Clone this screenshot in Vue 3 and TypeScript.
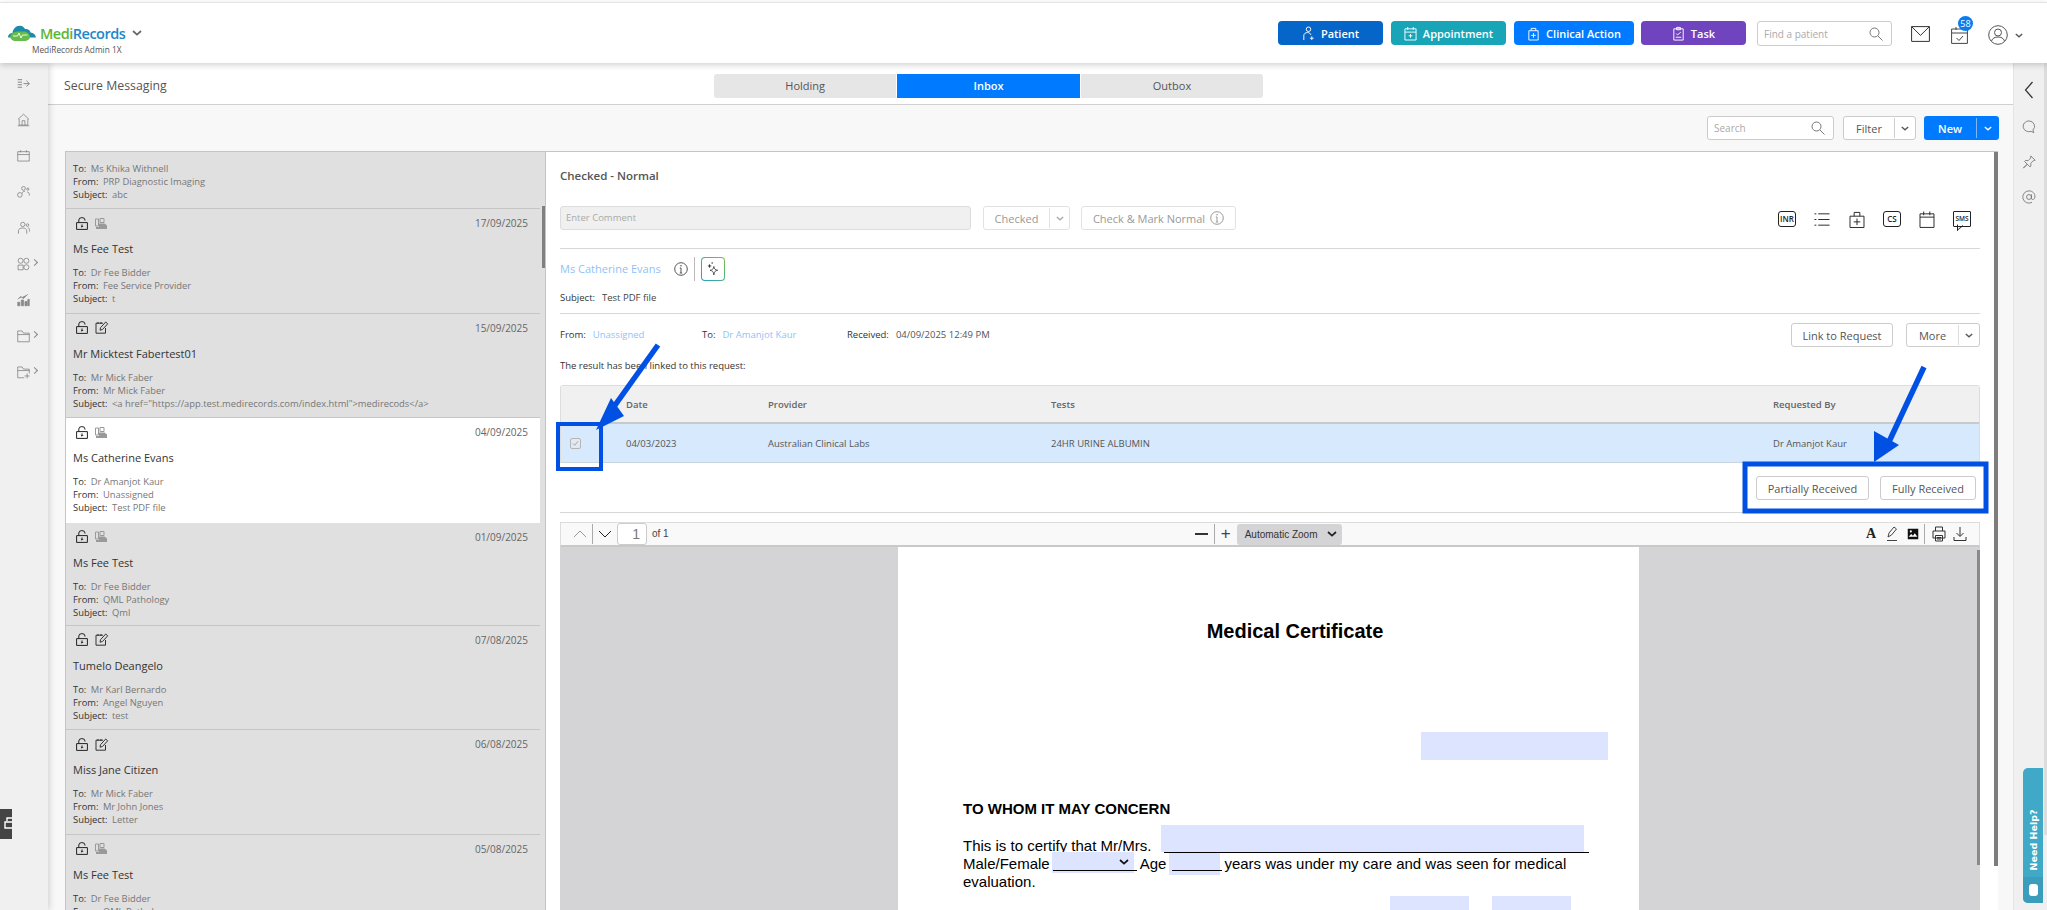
<template>
  <div class="app">
    <svg class="defs" width="0" height="0">
      <defs>
        <symbol id="lock" viewBox="0 0 12 13">
          <path d="M.6 5.6h10.8v6.8H.6zM2.800 5.400V3a3.100 2.400 0 0 1 6.200 0v.6M6 7.400v2.600M4.900 9.100 6 10.200l1.100-1.100" fill="none" stroke="#222" stroke-width="1" />
        </symbol>
        <symbol id="fax" viewBox="0 0 12 11">
          <path d="M.5 1h3v7h-3zM5 .5h4v4H5z" fill="none" stroke="#999" />
          <path d="M4 5.500h5.500l2.500 2V11H1V9h3z" fill="#999" />
        </symbol>
        <symbol id="note" viewBox="0 0 14 13">
          <path d="M1 2.200h7M1 2.200v10h9.500V7M3 1v2M6 1v2M5 9.200l.5-2.500L10.700 1l2 1.800L7.500 8.500z" fill="none" stroke="#333" stroke-width="1" />
        </symbol>
        <symbol id="chev" viewBox="0 0 10 6">
          <path d="M1 1l4 3.600L9 1" fill="none" stroke="currentColor" stroke-width="1.700" />
        </symbol>
        <symbol id="search" viewBox="0 0 14 14">
          <circle cx="5.500" cy="5.500" r="4.500" fill="none" stroke="#777" />
          <path d="M9 9l4.500 4.500" stroke="#777" />
        </symbol>
        <symbol id="info" viewBox="0 0 14 14">
          <circle cx="7" cy="7" r="6.300" fill="none" stroke="currentColor" />
          <path d="M7 6v5M5.800 6H7M5.800 11h2.400" stroke="currentColor" fill="none" />
          <circle cx="7" cy="3.800" r=".8" fill="currentColor" />
        </symbol>
      </defs>
    </svg>

    <header class="topbar">
      <div class="brand">
        <div class="brand-row">
          <svg class="logo" viewBox="0 0 28 16">
            <path d="M0 12.500C0 9.500 2 8 4.500 8 5 4 8 .5 12 .8c2.500.2 4 1.500 5 3.200 3-.3 5 1 5.500 3.500 3 .3 5 2.300 5.500 5z" fill="#1b8ba8" />
            <path d="M2.500 10.500C3.500 7.500 7 6.500 11 6.500h4c4 0 6.500 2 7 5 .3 2.500-2.500 4.500-6 4.500H8c-3.500 0-6.500-2-5.500-5.500z" fill="#66bb4a" />
            <path d="M5 11h4.500l1.500-3 2 5 1.500-3h5" fill="none" stroke="#fff" stroke-width=".9" />
          </svg>
          <span class="brand-name"><span class="medi">Medi</span><span class="records">Records</span></span>
          <svg class="brand-chev"><use href="#chev" /></svg>
        </div>
        <div class="brand-sub">MediRecords Admin 1X</div>
      </div>
      <div class="actions">
        <button class="act patient">
          <svg viewBox="0 0 12 16"><circle cx="6" cy="3.500" r="2.400" fill="none" stroke="#fff" /><path d="M1 15V10c0-2 2-3 4-3 2 0 3 1 3.500 2.500M7.500 13h4M9.500 11v4" fill="none" stroke="#fff" /></svg>
          Patient
        </button>
        <button class="act appt">
          <svg viewBox="0 0 14 16"><path d="M1 3h12v12H1zM1 6.500h12M4 1v3M10 1v3M7 8.500v4M5 10.500h4" fill="none" stroke="#fff" /></svg>
          Appointment
        </button>
        <button class="act clinical">
          <svg viewBox="0 0 14 16"><path d="M2 5h10v10H2zM4.500 5V2.500h5V5M7 7.500v5M4.500 10h5" fill="none" stroke="#fff" /></svg>
          Clinical Action
        </button>
        <button class="act task">
          <svg viewBox="0 0 12 16"><path d="M1 3h10v12H1zM4 1.500h4V4H4zM3.500 8l1.500 1.500L8.500 6.500M3 12h6" fill="none" stroke="#fff" /></svg>
          Task
        </button>
        <div class="find"><span>Find a patient</span><svg><use href="#search" /></svg></div>
        <svg class="mail" viewBox="0 0 19 16"><path d="M.6.600h17.800v14.800H.6zM.6.600l8.900 8.800L18.400.6" fill="none" stroke="#333" /></svg>
        <div class="cal">
          <svg viewBox="0 0 17 18"><path d="M.6 3h15.800v14.400H.6zM.6 7h15.800M5 1v3M12 1v3M5.500 12l2.500 2.500 4-4.500" fill="none" stroke="#444" /></svg>
          <span class="badge">58</span>
        </div>
        <svg class="user" viewBox="0 0 20 20"><circle cx="10" cy="10" r="9.300" fill="none" stroke="#555" /><circle cx="10" cy="7.500" r="3.500" fill="none" stroke="#555" /><path d="M3.500 16c1-3 3.500-4 6.500-4s5.500 1 6.500 4" fill="none" stroke="#555" /></svg>
        <svg class="user-chev"><use href="#chev" /></svg>
      </div>
    </header>

    <div class="body">
      <aside class="rail">
        <svg class="rail-icon" viewBox="0 0 18 16"><path d="M1 2h6M1 5.500h6M1 9h6M1 12.500h6M9 7.500h8M13 3.500l4 4-4 4" fill="none" stroke="#777" stroke-width="1.200" /></svg>
        <svg class="rail-icon" viewBox="0 0 18 18"><path d="M1.500 8 9 1l7.500 7M3 7.500V16h12V7.500M7 16v-6h4v6M1 17h16" fill="none" stroke="#777" /></svg>
        <svg class="rail-icon" viewBox="0 0 18 18"><path d="M1 3h16v13H1zM1 7h16M5 1v3M13 1v3" fill="none" stroke="#777" /></svg>
        <svg class="rail-icon" viewBox="0 0 18 18"><circle cx="9" cy="4" r="2.600" fill="none" stroke="#777" /><circle cx="15" cy="5" r="1.500" fill="none" stroke="#777" /><circle cx="4" cy="13" r="3.200" fill="none" stroke="#777" /><path d="M7 11c.5-2 2-3 4-3M14 9c1.500 0 3 1 3 3v2" fill="none" stroke="#777" /></svg>
        <svg class="rail-icon" viewBox="0 0 18 18"><circle cx="8" cy="4" r="3" fill="none" stroke="#777" /><circle cx="14.500" cy="5" r="1.800" fill="none" stroke="#777" /><path d="M2 17v-4c0-3 3-4 6-4s5 1 5.500 4v4M15 9c1.500 0 2.500 1 2.500 3v2" fill="none" stroke="#777" /></svg>
        <div class="rail-more">
          <svg class="rail-icon" viewBox="0 0 18 18"><circle cx="5" cy="4.500" r="3.500" fill="none" stroke="#777" /><circle cx="13" cy="4.500" r="3.500" fill="none" stroke="#777" /><path d="M1.500 10.500h7v6.500h-7z" fill="none" stroke="#777" /><circle cx="13" cy="13.500" r="3.500" fill="none" stroke="#777" /></svg>
          <i class="rail-chev"></i>
        </div>
        <svg class="rail-icon" viewBox="0 0 18 18"><path d="M1 17V12h3v5zM6 17V9h3v8zM11 17v-6h3v6zM15 17V8h2v9zM1 8l4-4 4 3 6-6" fill="#888" stroke="#888" /></svg>
        <div class="rail-more">
          <svg class="rail-icon" viewBox="0 0 18 18"><path d="M1 2h6l2 3h8v12H1zM1 7h16" fill="none" stroke="#777" /></svg>
          <i class="rail-chev"></i>
        </div>
        <div class="rail-more">
          <svg class="rail-icon" viewBox="0 0 18 18"><path d="M17 11V5H9L7 2H1v15h9M1 7h16M14 11v7M10.500 14.500h7" fill="none" stroke="#777" /></svg>
          <i class="rail-chev"></i>
        </div>
      </aside>

      <main class="main">
        <div class="titlebar">
          <div class="page-title">Secure Messaging</div>
          <div class="tabs">
            <div class="tab">Holding</div>
            <div class="tab on">Inbox</div>
            <div class="tab">Outbox</div>
          </div>
        </div>

        <div class="content">
          <div class="toolbar">
            <div class="search"><span>Search</span><svg><use href="#search" /></svg></div>
            <div class="split-btn filter"><span class="label">Filter</span><span class="caret"><svg><use href="#chev" /></svg></span></div>
            <div class="split-btn new"><span class="label">New</span><span class="caret"><svg><use href="#chev" /></svg></span></div>
          </div>

          <div class="columns">
            <section class="list">
              <div class="msg first">
                <div class="meta"><b>To:</b> Ms Khika Withnell</div>
                <div class="meta"><b>From:</b> PRP Diagnostic Imaging</div>
                <div class="meta"><b>Subject:</b> abc</div>
              </div>
              <div v-for="m in messages" :key="m.date" class="msg" :class="{ active: m.active, short: m.short }">
                <div class="msg-top">
                  <svg class="ic-lock"><use href="#lock" /></svg>
                  <svg v-if="m.kind === 'fax'" class="ic-fax"><use href="#fax" /></svg>
                  <svg v-else class="ic-note"><use href="#note" /></svg>
                  <span class="date">{{ m.date }}</span>
                </div>
                <div class="name">{{ m.name }}</div>
                <div class="meta"><b>To:</b> {{ m.to }}</div>
                <div class="meta"><b>From:</b> {{ m.from }}</div>
                <div class="meta"><b>Subject:</b> {{ m.subject }}</div>
              </div>
              <div class="list-thumb"></div>
            </section>

            <section class="detail">
              <div class="detail-head">Checked - Normal</div>
              <div class="row-actions">
                <div class="comment">Enter Comment</div>
                <div class="btn ghost checked"><span class="label">Checked</span><span class="caret"><svg><use href="#chev" /></svg></span></div>
                <div class="btn ghost mark">Check &amp; Mark Normal <svg class="ic-info"><use href="#info" /></svg></div>
                <div class="tools">
                  <span class="tag">INR</span>
                  <svg class="tool" viewBox="0 0 16 18"><path d="M4 3h12M4 9h12M4 15h12M0 3h2M0 9h2M0 15h2" stroke="#222" fill="none" /></svg>
                  <svg class="tool" viewBox="0 0 16 18"><path d="M.6 5.500h14.800v12H.6zM5 5.500V1.500h6v4M8 8v7M4.500 11.500h7" stroke="#222" fill="none" /></svg>
                  <span class="tag">CS</span>
                  <svg class="tool" viewBox="0 0 16 18"><path d="M.6 3h14.800v14.400H.6zM.6 6.500h14.800M4.500 .5v4M11 .5v4" stroke="#222" fill="none" /></svg>
                  <span class="tag sms">SMS</span>
                </div>
              </div>

              <div class="patient-row">
                <span class="patient-name">Ms Catherine Evans</span>
                <svg class="ic-info dark"><use href="#info" /></svg>
                <i class="vr"></i>
                <span class="ai">
                  <svg viewBox="0 0 14 16"><path d="M8 5c.4 3 1.500 4 4.500 4.500C9.500 10 8.400 11 8 15c-.4-4-1.500-5-4.500-5.500C6.500 9 7.600 8 8 5z" fill="none" stroke="#444" /><path d="M3 2.500v4M1 4.500h4" stroke="#222" /><circle cx="6" cy="1" r=".8" fill="#222" /></svg>
                </span>
              </div>
              <div class="subject"><b>Subject:</b><span>Test PDF file</span></div>

              <div class="route-row">
                <span class="route"><b>From:</b><em>Unassigned</em></span>
                <span class="route to"><b>To:</b><em>Dr Amanjot Kaur</em></span>
                <span class="route rec"><b>Received:</b><span>04/09/2025 12:49 PM</span></span>
                <div class="btn link">Link to Request</div>
                <div class="btn more"><span class="label">More</span><span class="caret"><svg><use href="#chev" /></svg></span></div>
              </div>

              <div class="linked">The result has been linked to this request:</div>

              <div class="table">
                <div class="t-head">
                  <span></span><span>Date</span><span>Provider</span><span>Tests</span><span>Requested By</span>
                </div>
                <div class="t-row">
                  <span class="check"><svg viewBox="0 0 11 11"><path d="M2.500 5.500l2 2.200 4-5" fill="none" stroke="#999" /></svg></span>
                  <span>04/03/2023</span><span>Australian Clinical Labs</span><span>24HR URINE ALBUMIN</span><span>Dr Amanjot Kaur</span>
                </div>
              </div>

              <div class="receive">
                <div class="btn">Partially Received</div>
                <div class="btn">Fully Received</div>
              </div>

              <div class="pdf">
                <div class="pdf-bar">
                  <svg class="pdf-nav up" viewBox="0 0 14 8"><path d="M1 7l6-6 6 6" fill="none" stroke="#999" /></svg>
                  <i class="pdf-vr"></i>
                  <svg class="pdf-nav" viewBox="0 0 14 8"><path d="M1 1l6 6 6-6" fill="none" stroke="#222" /></svg>
                  <span class="page-input">1</span>
                  <span class="page-of">of 1</span>
                  <span class="zoom-minus"></span>
                  <i class="pdf-vr"></i>
                  <span class="zoom-plus">+</span>
                  <span class="zoom-select">Automatic Zoom<svg><use href="#chev" /></svg></span>
                  <span class="pdf-tools">
                    <span class="pdf-a">A</span>
                    <svg viewBox="0 0 14 16"><path d="M3 11 4 7l5-6 2.500 2-5 6zM2 14.500h10" fill="none" stroke="#444" /></svg>
                    <svg viewBox="-1 -1 16 16"><path d="M1 1h12v12H1z" fill="#111" /><path d="M2 10l3-3 2 2 2-3 3 4z" fill="#fff" /><circle cx="4.500" cy="4" r="1.200" fill="#fff" /></svg>
                    <i class="pdf-vr tools-vr"></i>
                    <svg viewBox="0 0 14 16"><path d="M3.500 5V1h7v4M1 5h12v7H1zM3.500 9.500h7V15h-7zM5 11.500h4M5 13h4" fill="none" stroke="#333" /></svg>
                    <svg viewBox="0 0 14 16"><path d="M7 1v9M3.500 7 7 10.500 10.500 7M1 11v3.500h12V11" fill="none" stroke="#333" /></svg>
                  </span>
                </div>
                <div class="pdf-view">
                  <div class="pdf-page">
                    <h1>Medical Certificate</h1>
                    <h2>TO WHOM IT MAY CONCERN</h2>
                    <p>
                      This is to certify that Mr/Mrs.<br />
                      Male/Female<span class="gap-a"></span>Age<span class="gap-b"></span>years was under my care and was seen for medical<br />
                      evaluation.
                    </p>
                    <div class="fld f-date"></div>
                    <div class="fld f-name"></div>
                    <div class="fld f-sex"><svg><use href="#chev" /></svg></div>
                    <div class="rule r-sex"></div>
                    <div class="fld f-age"></div>
                    <div class="rule r-age"></div>
                    <div class="rule r-name"></div>
                    <div class="fld f-b1"></div>
                    <div class="fld f-b2"></div>
                  </div>
                  <div class="pdf-thumb"></div>
                </div>
              </div>
              <div class="detail-thumb"></div>
            </section>
          </div>
        </div>
      </main>

      <aside class="side">
        <svg class="side-icon back" viewBox="0 0 10 18"><path d="M8.500 1 1.500 9l7 8" fill="none" stroke="#333" stroke-width="1.200" /></svg>
        <svg class="side-icon" viewBox="0 0 16 16"><path d="M8 1a6.800 6.200 0 1 0 2.500 12l3 1.500-1-3A6.800 6.200 0 0 0 8 1z" fill="none" stroke="#777" /></svg>
        <svg class="side-icon" viewBox="0 0 16 16"><path d="M10 1l5 5-2 .5-3 3 .3 3-1.300 1-3-3-4.500 4.500 4.500-4.500-3-3 1-1.300 3 .3 3-3z" fill="none" stroke="#777" /></svg>
        <svg class="side-icon" viewBox="0 0 16 16"><circle cx="8" cy="8" r="2.800" fill="none" stroke="#777" /><path d="M10.800 5v4.500c0 2 3.700 2 4-1.500C15 4 12 1 8 1a7 7 0 1 0 3.500 13" fill="none" stroke="#777" /></svg>
        <div class="side-scroll"></div>
      </aside>
    </div>

    <div class="float-box">
      <svg viewBox="0 0 12 14"><path d="M3 4V1h6v3M1 5h10v6H1z" fill="none" stroke="#fff" stroke-width="1.400" /></svg>
    </div>
    <div class="help">
      <span class="help-text">Need Help?</span>
      <span class="help-foot"><i></i></span>
    </div>

    <svg class="marks" viewBox="0 0 2047 910">
      <rect x="558" y="424" width="43" height="45" fill="none" stroke="#0050e3" stroke-width="4" />
      <rect x="1745" y="464" width="241" height="47" fill="none" stroke="#0050e3" stroke-width="5" />
      <path d="M658 345 608 415" stroke="#0050e3" stroke-width="5.500" fill="none" />
      <polygon points="611,398 624,416 596,430" fill="#0050e3" />
      <path d="M1924 367 1887 446" stroke="#0050e3" stroke-width="5.500" fill="none" />
      <polygon points="1874,431 1899,445 1874,462" fill="#0050e3" />
    </svg>
  </div>
</template>

<script setup lang="ts">
interface Message {
  date: string
  name: string
  to: string
  from: string
  subject: string
  kind: 'fax' | 'note'
  active?: boolean
  short?: boolean
}

const messages: Message[] = [
  { date: '17/09/2025', name: 'Ms Fee Test', to: 'Dr Fee Bidder', from: 'Fee Service Provider', subject: 't', kind: 'fax' },
  { date: '15/09/2025', name: 'Mr Micktest Fabertest01', to: 'Mr Mick Faber', from: 'Mr Mick Faber', subject: '<a href="https://app.test.medirecords.com/index.html">medirecods</a>', kind: 'note' },
  { date: '04/09/2025', name: 'Ms Catherine Evans', to: 'Dr Amanjot Kaur', from: 'Unassigned', subject: 'Test PDF file', kind: 'fax', active: true },
  { date: '01/09/2025', name: 'Ms Fee Test', to: 'Dr Fee Bidder', from: 'QML Pathology', subject: 'Qml', kind: 'fax', short: true },
  { date: '07/08/2025', name: 'Tumelo Deangelo', to: 'Mr Karl Bernardo', from: 'Angel Nguyen', subject: 'test', kind: 'note' },
  { date: '06/08/2025', name: 'Miss Jane Citizen', to: 'Mr Mick Faber', from: 'Mr John Jones', subject: 'Letter', kind: 'note' },
  { date: '05/08/2025', name: 'Ms Fee Test', to: 'Dr Fee Bidder', from: 'QML Pathology', subject: 'Qml', kind: 'fax' },
]
</script>

<style>
html, body {
  margin: 0;
  overflow: hidden;
}
</style>

<style scoped>
* {
  box-sizing: border-box;
}

.app {
  position: relative;
  width: 2047px;
  height: 910px;
  overflow: hidden;
  display: flex;
  flex-direction: column;
  background: #fff;
  font-family: "Open Sans", "Liberation Sans", sans-serif;
  color: #444;
}

.defs {
  position: absolute;
}

/* top bar */
.topbar {
  position: relative;
  z-index: 3;
  flex: none;
  height: 61px;
  margin-top: 2px;
  display: flex;
  justify-content: space-between;
  border-top: 1px solid #e4e4e4;
  box-shadow: 0 2px 6px rgba(0, 0, 0, 0.18);
  background: #fff;
  padding-left: 8px;
}

.brand {
  padding-top: 20px;
}

.brand-row {
  display: flex;
  align-items: center;
  height: 20px;
}

.logo {
  width: 28px;
  height: 16px;
}

.brand-name {
  margin-left: 4px;
  font-size: 14.5px;
  font-weight: 600;
  letter-spacing: -0.5px;
}

.medi {
  color: #5cb531;
}

.records {
  color: #1c87c9;
}

.brand-chev {
  width: 10px;
  height: 6px;
  margin-left: 7px;
  color: #666;
}

.brand-sub {
  margin: 1px 0 0 24px;
  font-size: 8.3px;
  color: #555;
}

.actions {
  display: flex;
  align-items: flex-start;
  padding: 18px 24px 0 0;
}

.act {
  height: 24px;
  display: flex;
  align-items: center;
  justify-content: center;
  gap: 6px;
  border: 0;
  border-radius: 4px;
  color: #fff;
  font: 600 11px "Open Sans", sans-serif;
  padding: 0;
}

.act svg {
  width: 13px;
  height: 15px;
}

.patient {
  width: 105px;
  background: #0565c8;
}

.appt {
  width: 115px;
  margin-left: 8px;
  background: #19a5b8;
}

.clinical {
  width: 120px;
  margin-left: 8px;
  background: #007bff;
}

.task {
  width: 105px;
  margin-left: 7px;
  background: #7043bf;
}

.find,
.search {
  height: 25px;
  display: flex;
  align-items: center;
  justify-content: space-between;
  border: 1px solid #ccc;
  border-radius: 3px;
  background: #fff;
  padding: 0 8px 0 6px;
  font-size: 10px;
  color: #aaa;
}

.find svg,
.search svg {
  width: 14px;
  height: 14px;
}

.find {
  width: 135px;
  margin-left: 11px;
}

.mail {
  width: 19px;
  height: 16px;
  margin: 5px 0 0 19px;
}

.cal {
  position: relative;
  margin-left: 21px;
}

.cal svg {
  display: block;
  width: 17px;
  height: 18px;
  margin-top: 5px;
}

.badge {
  position: absolute;
  left: 7px;
  top: -5px;
  width: 15px;
  height: 15px;
  border-radius: 50%;
  background: #0a7cf0;
  color: #fff;
  font-size: 9px;
  line-height: 15px;
  text-align: center;
}

.user {
  width: 20px;
  height: 20px;
  margin: 4px 0 0 20px;
}

.user-chev {
  width: 8px;
  height: 5px;
  margin: 12px 0 0 7px;
  color: #555;
}

/* page body */
.body {
  flex: 1;
  display: flex;
  min-height: 0;
}

.rail {
  position: relative;
  z-index: 2;
  flex: none;
  width: 48px;
  display: flex;
  flex-direction: column;
  gap: 18px;
  padding: 12px 0 0 17px;
  background: #f0f0f0;
  box-shadow: 2px 0 6px rgba(0, 0, 0, 0.14);
}

.rail-icon {
  display: block;
  width: 13px;
  height: 18px;
}

.rail-more {
  display: flex;
  align-items: center;
  gap: 2px;
}

.rail-chev {
  width: 5px;
  height: 5px;
  border-top: 1px solid #888;
  border-right: 1px solid #888;
  transform: rotate(45deg);
  margin-top: -3px;
}

.main {
  flex: 1;
  min-width: 0;
  display: flex;
  flex-direction: column;
}

.titlebar {
  flex: none;
  height: 42px;
  display: flex;
  align-items: flex-start;
  border-bottom: 1px solid #cfcfcf;
  padding-left: 16px;
  background: #fff;
}

.page-title {
  width: 650px;
  padding-top: 13px;
  font-size: 12.3px;
  line-height: 20px;
  font-weight: 500;
  color: #555;
}

.tabs {
  display: flex;
  gap: 1px;
  margin-top: 11px;
}

.tab {
  width: 182.4px;
  height: 24px;
  background: #e6e6e6;
  font-size: 11px;
  font-weight: 500;
  line-height: 24px;
  text-align: center;
  color: #555;
}

.tab:first-child {
  border-radius: 3px 0 0 3px;
}

.tab:last-child {
  border-radius: 0 3px 3px 0;
}

.tab.on {
  background: #007bff;
  color: #fff;
  font-weight: 600;
}

.content {
  flex: 1;
  min-height: 0;
  display: flex;
  flex-direction: column;
  background: #f8f8f8;
}

.toolbar {
  flex: none;
  height: 46px;
  display: flex;
  padding: 11px 14px 0 0;
  justify-content: flex-end;
}

.search {
  width: 127px;
  height: 24px;
}

.split-btn,
.btn {
  height: 24px;
  display: flex;
  align-items: center;
  justify-content: center;
  border: 1px solid #ccc;
  border-radius: 3px;
  background: #fff;
  font-size: 11px;
  color: #555;
}

.caret {
  height: 20px;
  display: flex;
  align-items: center;
  justify-content: center;
  border-left: 1px solid #ccc;
}

.caret svg {
  width: 8px;
  height: 5px;
}

.filter {
  width: 73px;
  margin-left: 9px;
}

.filter .label {
  flex: 1;
  text-align: center;
}

.filter .caret {
  width: 21px;
}

.new {
  width: 75px;
  margin-left: 8px;
  border: 0;
  background: #007bff;
  color: #fff;
  font-weight: 600;
}

.new .label {
  flex: 1;
  text-align: center;
}

.new .caret {
  width: 23px;
  border-color: #7cb8fb;
}

.columns {
  flex: 1;
  min-height: 0;
  display: flex;
  margin: 0 15px 0 17px;
  border-top: 1px solid #c4c4c4;
}

/* message list */
.list {
  position: relative;
  flex: none;
  width: 480px;
  padding-right: 5px;
  background: #e0e0e0;
  border-left: 1px solid #c4c4c4;
  overflow: hidden;
  font-size: 9.4px;
}

.msg {
  height: 104.6px;
  padding: 4px 0 0 7px;
  border-bottom: 1px solid #c6c6c6;
  background: #e0e0e0;
}

.msg.first {
  height: 57px;
  padding-top: 10px;
}

.msg.active {
  background: #fff;
  border-bottom-color: #fff;
}

.msg.short {
  height: 103px;
}

.msg-top {
  display: flex;
  align-items: center;
  height: 20px;
  padding: 0 12px 0 3px;
}

.ic-lock {
  width: 12px;
  height: 13px;
}

.ic-fax {
  width: 12px;
  height: 11px;
  margin-left: 7px;
}

.ic-note {
  width: 14px;
  height: 13px;
  margin-left: 7px;
}

.date {
  margin-left: auto;
  font-size: 10px;
  color: #666;
}

.name {
  margin-top: 7px;
  font-size: 11px;
  line-height: 18px;
  color: #333;
}

.msg-top + .name + .meta {
  margin-top: 8px;
}

.meta {
  line-height: 13px;
  color: #777;
}

.meta b {
  font-weight: 400;
  color: #333;
  margin-right: 2px;
}

.list-thumb {
  position: absolute;
  right: 0;
  top: 54px;
  width: 3px;
  height: 62px;
  background: #808080;
}

/* detail */
.detail {
  position: relative;
  flex: 1;
  min-width: 0;
  padding: 0 18px 0 14px;
  background: #fff;
  border-left: 1px solid #c4c4c4;
}

.detail-head {
  height: 54px;
  padding-top: 14px;
  font-size: 11.5px;
  line-height: 20px;
  font-weight: 600;
  color: #555;
}

.row-actions {
  height: 43px;
  display: flex;
  align-items: flex-start;
  border-bottom: 1px solid #d8d8d8;
}

.comment {
  width: 411px;
  height: 24px;
  border: 1px solid #ddd;
  border-radius: 3px;
  background: #f0f0f0;
  font-size: 9.5px;
  line-height: 22px;
  color: #aaa;
  padding-left: 5px;
}

.ghost {
  border-color: #e2e2e2;
  color: #999;
}

.checked {
  width: 87px;
  margin-left: 12px;
}

.checked .label {
  width: 65px;
  text-align: center;
}

.checked .caret {
  flex: 1;
  color: #aaa;
  border-color: #e2e2e2;
}

.mark {
  width: 155px;
  margin-left: 11px;
  gap: 5px;
}

.ic-info {
  width: 14px;
  height: 14px;
  color: #999;
}

.ic-info.dark {
  color: #555;
}

.tools {
  flex: 1;
  display: flex;
  align-items: center;
  justify-content: flex-end;
  gap: 17px;
  height: 26px;
  padding-right: 9px;
}

.tag {
  position: relative;
  width: 18px;
  height: 16px;
  border: 1px solid #222;
  border-radius: 3px;
  font-size: 8px;
  font-weight: 600;
  line-height: 14px;
  text-align: center;
  color: #222;
}

.sms {
  font-size: 6.5px;
  border-radius: 1px;
  background: #fff;
}

.sms::after {
  content: "";
  position: absolute;
  left: 3px;
  bottom: -5px;
  width: 5px;
  height: 5px;
  border-left: 1px solid #222;
  border-bottom: 1px solid #222;
  transform: skewY(-40deg);
  transform-origin: top left;
}

.tool {
  width: 18px;
  height: 17px;
}

.patient-row {
  height: 40px;
  display: flex;
  align-items: flex-start;
  padding-top: 8px;
}

.patient-name {
  width: 114px;
  font-size: 11px;
  line-height: 24px;
  color: #8fc2f8;
}

.patient-row .ic-info {
  margin-top: 5px;
}

.vr {
  width: 1px;
  height: 24px;
  margin: 0 6px 0 6px;
  background: #bbb;
}

.ai {
  width: 24px;
  height: 24px;
  display: flex;
  align-items: center;
  justify-content: center;
  border: 1px solid transparent;
  border-radius: 4px;
  background: linear-gradient(#fff, #fff) padding-box, linear-gradient(45deg, #1f9fd0, #7ac143) border-box;
}

.ai svg {
  width: 12px;
  height: 14px;
}

.subject {
  height: 25px;
  border-bottom: 1px solid #d8d8d8;
  font-size: 9.5px;
  line-height: 18px;
  color: #444;
}

.subject b {
  font-weight: 400;
  color: #333;
  margin-right: 7px;
}

.route-row {
  height: 53px;
  display: flex;
  align-items: flex-start;
  padding-top: 9px;
}

.route {
  display: flex;
  width: 142px;
  font-size: 9.5px;
  line-height: 24px;
  gap: 7px;
  color: #555;
}

.route b {
  font-weight: 400;
  color: #333;
}

.route em {
  font-style: normal;
  color: #8fc2f8;
}

.route.to {
  width: 145px;
}

.route.rec {
  width: 0;
  flex: 1;
}

.link {
  width: 102px;
}

.more {
  width: 74px;
  margin-left: 13px;
}

.more .label {
  width: 51px;
  text-align: center;
}

.more .caret {
  flex: 1;
  border-color: #ddd;
}

.linked {
  height: 18px;
  margin-top: -11px;
  font-size: 9.5px;
  line-height: 20px;
  color: #333;
}

.table {
  margin-top: 11px;
  font-size: 9.5px;
  border: 1px solid #ddd;
  border-bottom: 0;
  border-radius: 3px 3px 0 0;
}

.t-head,
.t-row {
  display: grid;
  grid-template-columns: 65px 142px 283px 722px 1fr;
  align-items: center;
}

.t-head {
  height: 38px;
  background: #f0f0f0;
  border-bottom: 2px solid #c9c9c9;
  font-weight: 600;
  color: #666;
}

.t-row {
  height: 39px;
  background: #d7e9fd;
  border-bottom: 1px solid #c9d4df;
  color: #555;
}

.check {
  width: 11px;
  height: 11px;
  margin-left: 9px;
  border: 1px solid #b5b5b5;
  border-radius: 2px;
  background: #e3e9f0;
}

.check svg {
  display: block;
  width: 9px;
  height: 9px;
}

.receive {
  height: 50px;
  display: flex;
  justify-content: flex-end;
  gap: 11px;
  padding: 13px 4px 0 0;
  border-bottom: 1px solid #d8d8d8;
}

.receive .btn:first-child {
  width: 113px;
}

.receive .btn:last-child {
  width: 96px;
}

/* pdf viewer */
.pdf {
  margin-top: 9px;
}

.pdf-bar {
  height: 25px;
  display: flex;
  align-items: center;
  border: 1px solid #ddd;
  border-bottom: 2px solid #c9c9c9;
  background: #f9f9f9;
  font-family: "Liberation Sans", Arial, sans-serif;
  font-size: 10px;
  padding-left: 12px;
}

.pdf-nav {
  width: 14px;
  height: 8px;
  margin: 0 5px;
}

.pdf-nav.up {
  margin-left: 0;
}

.pdf-vr {
  width: 1px;
  height: 20px;
  background: #aaa;
}

.tools-vr {
  margin-left: -3px;
}

.page-input {
  width: 30px;
  height: 22px;
  border: 1px solid #ccc;
  border-radius: 3px;
  background: #fff;
  font-size: 14px;
  line-height: 20px;
  text-align: right;
  padding-right: 6px;
  color: #777;
}

.page-of {
  margin-left: 5px;
  margin-bottom: 2px;
  color: #444;
}

.zoom-minus {
  width: 13px;
  height: 2px;
  background: #333;
  margin: 0 6px 0 526px;
}

.zoom-plus {
  width: 22px;
  text-align: center;
  font-size: 17px;
  color: #444;
}

.zoom-select {
  width: 105px;
  height: 21px;
  display: flex;
  align-items: center;
  justify-content: space-between;
  border-radius: 3px;
  background: #d4d4d7;
  color: #333;
  padding: 0 5px 0 8px;
}

.zoom-select svg {
  width: 10px;
  height: 6px;
  color: #222;
}

.pdf-tools {
  display: flex;
  align-items: center;
  gap: 7px;
  margin-left: auto;
  padding-right: 12px;
}

.pdf-tools svg {
  width: 14px;
  height: 16px;
}

.pdf-a {
  font: bold 14px "Liberation Serif", serif;
  width: 14px;
  text-align: center;
  color: #222;
}

.pdf-view {
  position: relative;
  height: 363px;
  overflow: hidden;
  background: #d4d4d7;
  padding-left: 338px;
}

.pdf-page {
  position: relative;
  width: 741px;
  height: 363px;
  padding: 71px 12px 0 65px;
  background: #fff;
  font-family: "Liberation Sans", Arial, sans-serif;
  color: #000;
}

.pdf-page h1 {
  margin: 0;
  font-size: 20px;
  line-height: 26px;
  font-weight: 700;
  text-align: center;
}

.pdf-page h2 {
  margin: 156px 0 0;
  font-size: 15px;
  line-height: 18px;
  font-weight: 700;
}

.pdf-page p {
  margin: 19px 0 0;
  font-size: 15px;
  line-height: 18px;
}

.gap-a {
  display: inline-block;
  width: 90px;
}

.gap-b {
  display: inline-block;
  width: 58px;
}

.fld {
  position: absolute;
  background: #dde4ff;
}

.rule {
  position: absolute;
  height: 1px;
  background: #000;
}

.f-date {
  left: 523px;
  top: 185px;
  width: 187px;
  height: 28px;
}

.f-name {
  left: 263px;
  top: 278px;
  width: 423px;
  height: 27px;
}

.r-name {
  left: 266px;
  top: 305px;
  width: 425px;
}

.f-sex {
  left: 154px;
  top: 305px;
  width: 82px;
  height: 21px;
}

.f-sex svg {
  position: absolute;
  left: 67px;
  top: 7px;
  width: 10px;
  height: 6px;
  color: #111;
}

.r-sex {
  left: 155px;
  top: 323px;
  width: 84px;
}

.f-age {
  left: 271px;
  top: 305px;
  width: 51px;
  height: 23px;
}

.r-age {
  left: 274px;
  top: 323px;
  width: 50px;
}

.f-b1 {
  left: 492px;
  top: 349px;
  width: 79px;
  height: 20px;
}

.f-b2 {
  left: 594px;
  top: 349px;
  width: 79px;
  height: 20px;
}

.pdf-thumb {
  position: absolute;
  right: 0;
  top: 3px;
  width: 3px;
  height: 315px;
  background: #8a8a8a;
}

.detail-thumb {
  position: absolute;
  right: 0;
  top: 0;
  width: 4px;
  height: 714px;
  background: #7d7d7d;
}

/* right rail */
.side {
  position: relative;
  flex: none;
  width: 34px;
  display: flex;
  flex-direction: column;
  align-items: center;
  gap: 21px;
  padding: 18px 4px 0 0;
  background: #f0f0f0;
  border-left: 1px solid #e4e4e4;
}

.side-icon {
  width: 14px;
  height: 14px;
}

.side-icon.back {
  width: 10px;
  height: 18px;
}

.side-scroll {
  position: absolute;
  right: 0;
  top: 0;
  width: 3px;
  height: 772px;
  background: #dcdcdc;
}

.float-box {
  position: absolute;
  left: 0;
  top: 809px;
  width: 12px;
  height: 30px;
  display: flex;
  align-items: center;
  justify-content: flex-end;
  overflow: hidden;
  background: #444;
  z-index: 4;
}

.float-box svg {
  flex: none;
  width: 12px;
  height: 14px;
  margin-right: -4px;
}

.help {
  position: absolute;
  left: 2023px;
  top: 768px;
  width: 20px;
  height: 135px;
  border-radius: 5px 0 0 5px;
  background: #41a9c8;
  overflow: hidden;
  z-index: 4;
}

.help-text {
  position: absolute;
  left: 50%;
  top: 72px;
  transform: translate(-50%, -50%) rotate(-90deg);
  white-space: nowrap;
  font: bold 9.5px "DejaVu Sans", sans-serif;
  color: #fff;
}

.help-foot {
  position: absolute;
  left: 0;
  right: 0;
  bottom: 0;
  height: 26px;
  display: flex;
  align-items: center;
  justify-content: center;
  background: #3a9dbb;
}

.help-foot i {
  width: 9px;
  height: 12px;
  border-radius: 3px;
  background: #fff;
}

.marks {
  position: absolute;
  left: 0;
  top: 0;
  width: 2047px;
  height: 910px;
  pointer-events: none;
  z-index: 5;
}
</style>
